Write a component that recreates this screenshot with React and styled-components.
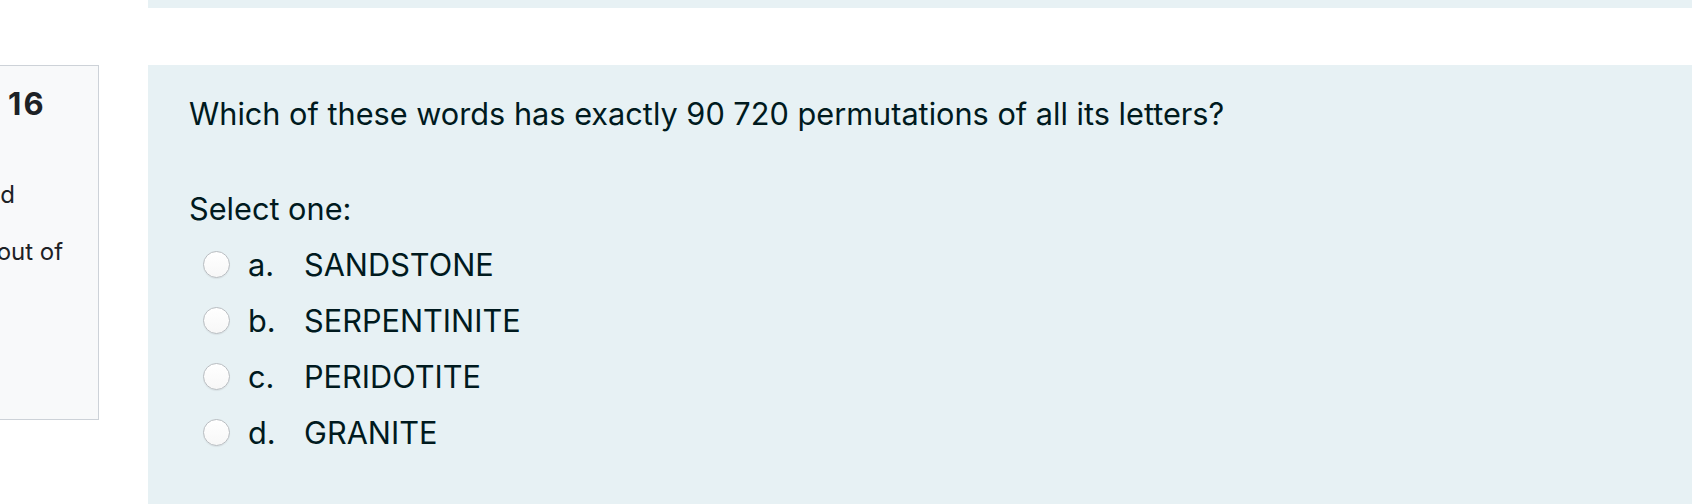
import React from "react"
import styled, { createGlobalStyle } from "styled-components"

const GlobalStyle = createGlobalStyle`
  html, body {
    margin: 0;
    padding: 0;
    background: #ffffff;
    overflow: hidden;
  }
  body {
    font-family: Inter, "Liberation Sans", Arial, sans-serif;
    color: #1d2125;
  }
`;

const Page = styled.div`
  width: 1699px;
  height: 504px;
  overflow: hidden;
  display: flex;
  flex-direction: column;
`;

const PrevPanel = styled.div`
  flex-shrink: 0;
  height: 8px;
  margin: 0 7px 0 148px;
  background: #e7f1f4;
`;

const QuestionRow = styled.div`
  flex-shrink: 0;
  display: flex;
  align-items: flex-start;
  margin-top: 57px;
`;

const InfoBox = styled.div`
  box-sizing: border-box;
  flex: 0 0 209px;
  width: 209px;
  height: 355px;
  margin-left: -110px;
  padding: 19px 29px 10px 13px;
  background: #f8f9fa;
  border: 1px solid #cdd2d8;
  font-size: 24px;
  line-height: 35px;
`;

const QTitle = styled.h3`
  display: flex;
  align-items: baseline;
  gap: 28px;
  margin: 0 0 14px;
  font-size: 18px;
  font-weight: 400;
  line-height: 38px;
  white-space: nowrap;
`;

const QNo = styled.span`
  font-size: 31px;
  font-weight: 700;
  letter-spacing: 2px;
`;

const InfoLine = styled.div`
  margin-bottom: ${(p) => p.$gap || 0}px;
`;

const Formulation = styled.div`
  box-sizing: border-box;
  flex: 1;
  min-height: 450px;
  margin: 0 7px 0 49px;
  padding: 26px 41px;
  background: #e7f1f4;
  color: #001a1e;
  font-size: 30.7px;
  line-height: 45px;
`;

const QText = styled.p`
  margin: 0 0 50px;
`;

const Prompt = styled.div`
  margin-bottom: 5px;
`;

const Option = styled.label`
  display: flex;
  align-items: center;
  height: 56px;
  padding-left: 14px;
`;

const Radio = styled.span`
  box-sizing: border-box;
  flex: 0 0 27px;
  width: 27px;
  height: 27px;
  border-radius: 50%;
  border: 1px solid #b9bdc1;
  background: linear-gradient(#ffffff, #f7f7f7);
  box-shadow: 0 1px 1px rgba(0, 0, 0, 0.06);
  margin-right: 18px;
`;

const Letter = styled.span`
  width: 56px;
`;

const options = [
  { n: "a.", t: "SANDSTONE" },
  { n: "b.", t: "SERPENTINITE" },
  { n: "c.", t: "PERIDOTITE" },
  { n: "d.", t: "GRANITE" },
];

const App = () => {
  return (
    <Page>
      <GlobalStyle />
      <PrevPanel />
      <QuestionRow>
        <InfoBox>
          <QTitle>
            <span>Question</span>
            <QNo>16</QNo>
          </QTitle>
          <InfoLine>Not yet answered</InfoLine>
          <InfoLine $gap={22} />
          <InfoLine>Marked out of 1.00</InfoLine>
        </InfoBox>
        <Formulation>
          <QText>Which of these words has exactly 90 720 permutations of all its letters?</QText>
          <Prompt>Select one:</Prompt>
          {options.map((o) => (
            <Option key={o.n}>
              <Radio />
              <Letter>{o.n}</Letter>
              <span>{o.t}</span>
            </Option>
          ))}
        </Formulation>
      </QuestionRow>
    </Page>
  );
};

export default App;
